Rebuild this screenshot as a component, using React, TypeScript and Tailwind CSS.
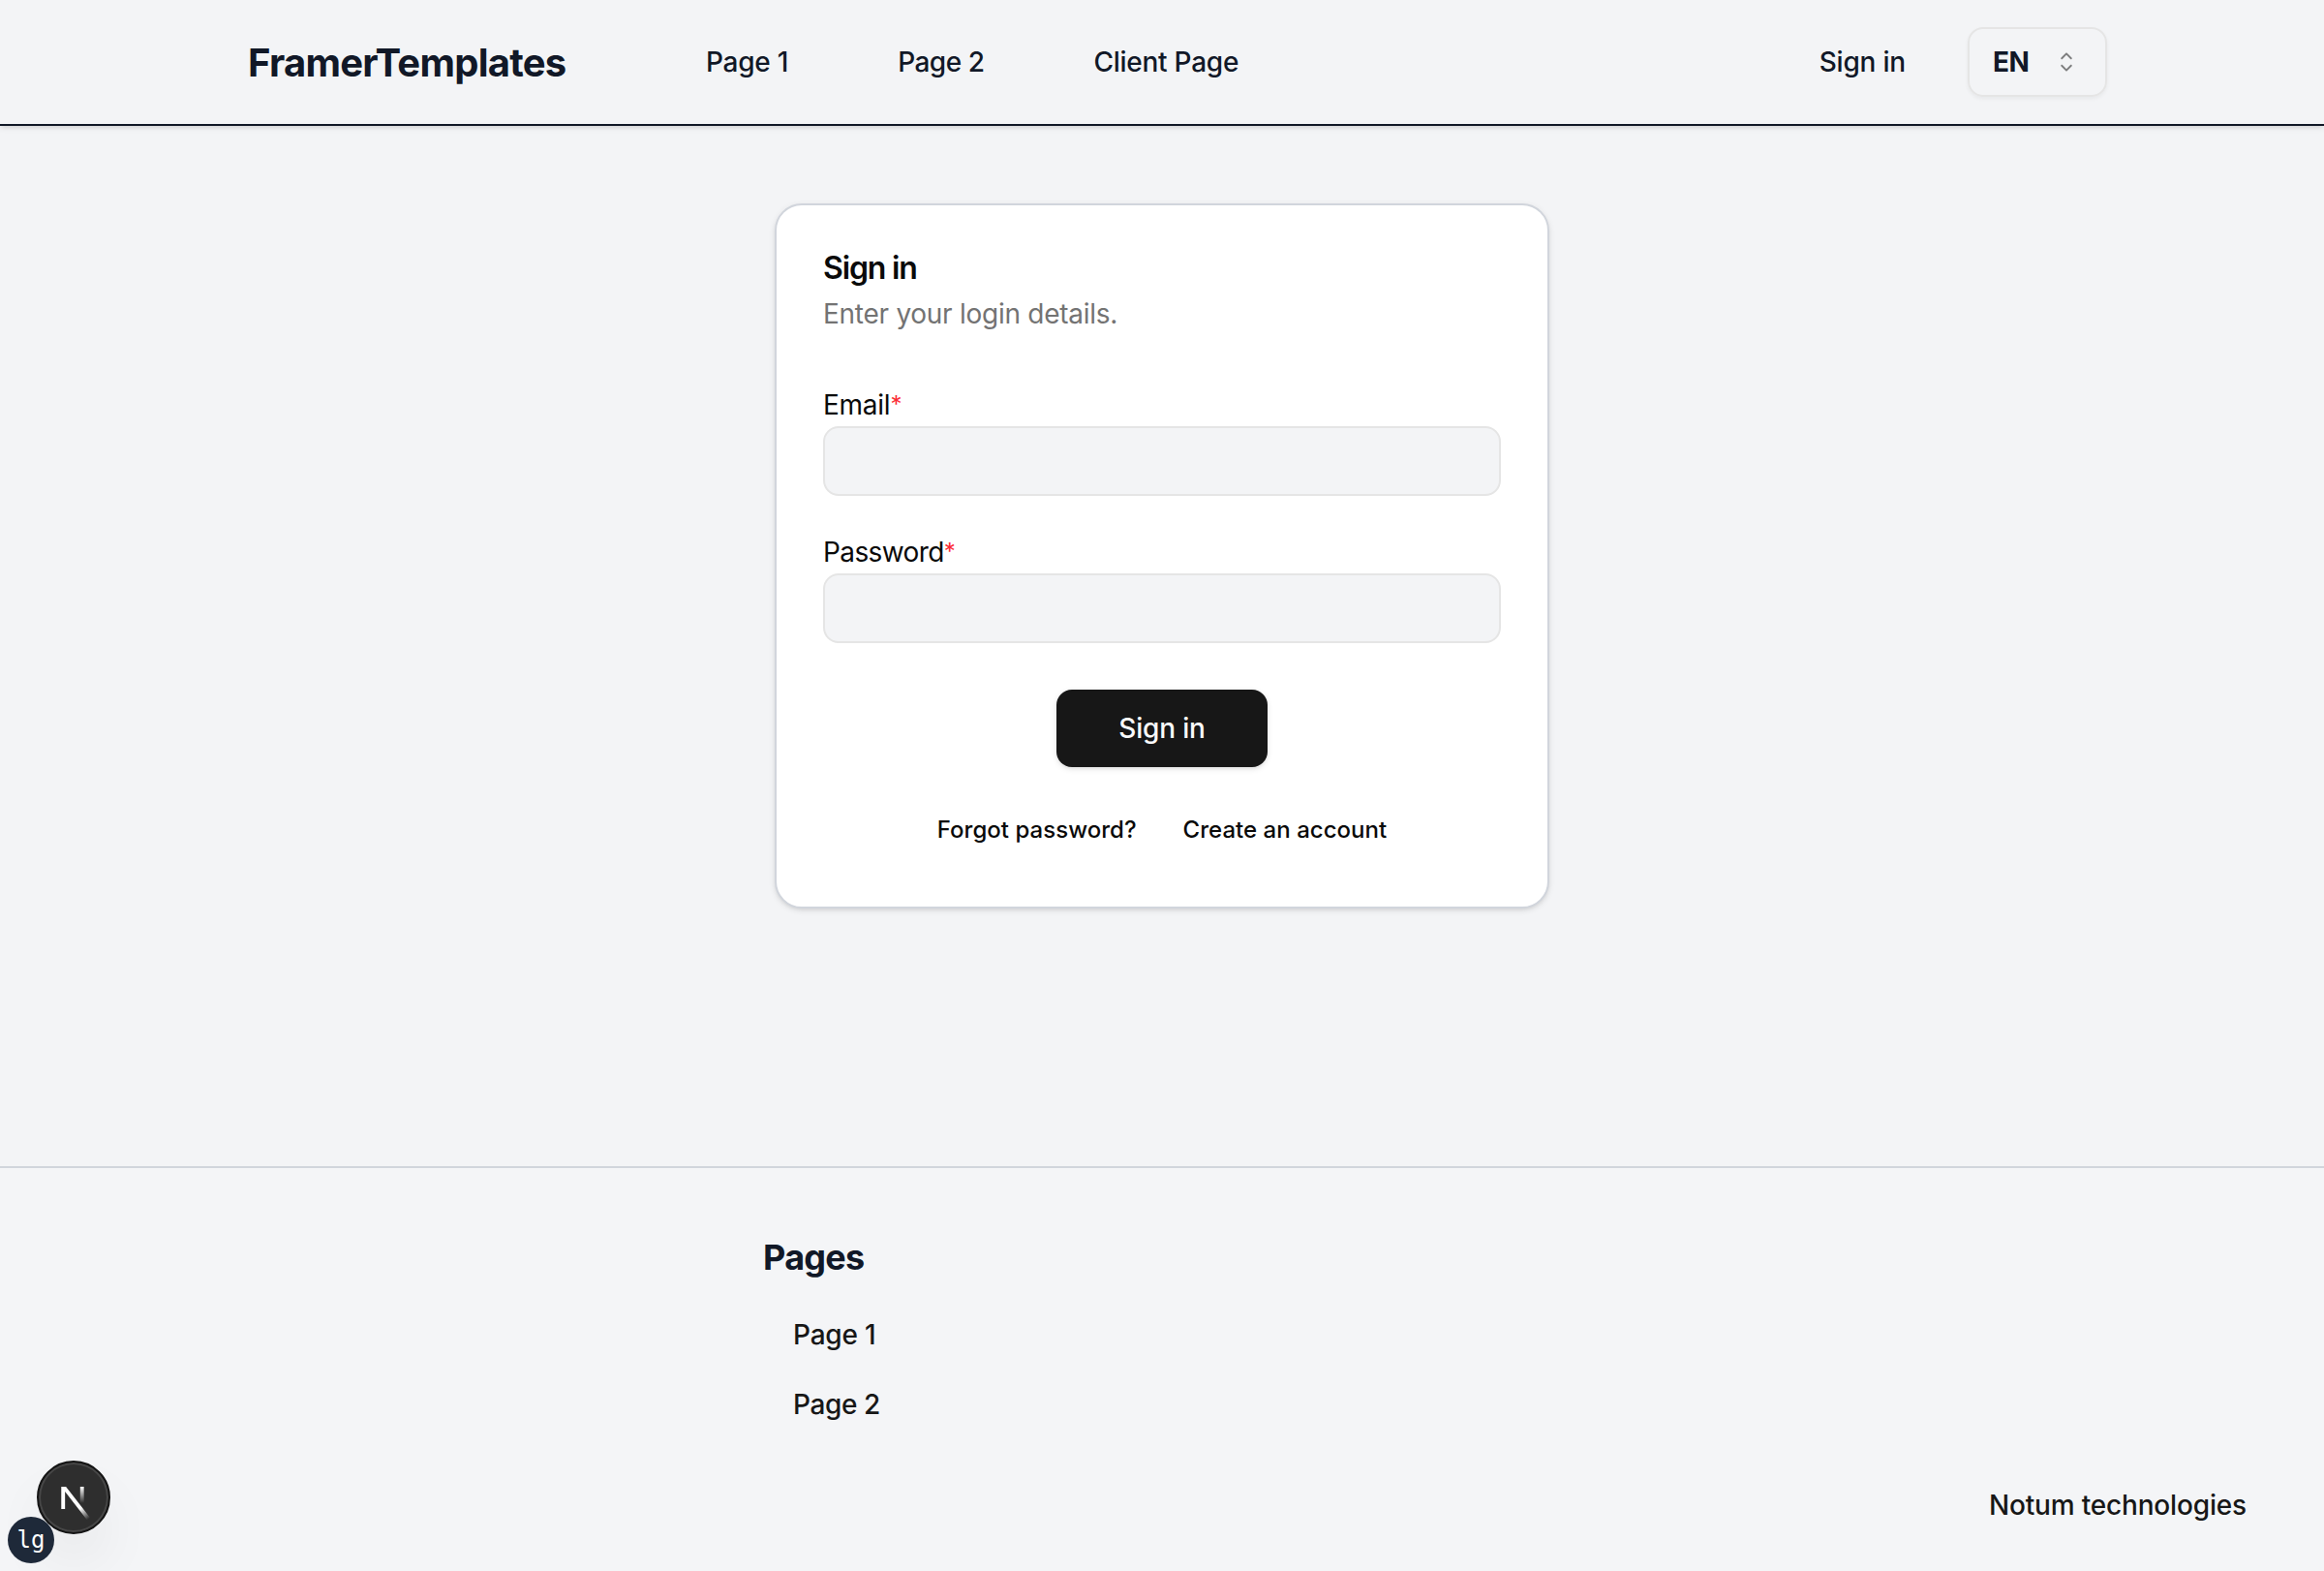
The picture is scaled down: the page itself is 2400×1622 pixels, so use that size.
function CaretSort() {
  return (
    <svg viewBox="0 0 15 15" className="size-8 opacity-50" fill="currentColor">
      <path
        fillRule="evenodd"
        clipRule="evenodd"
        d="M4.93179 5.43179C4.75605 5.60753 4.75605 5.89245 4.93179 6.06819C5.10753 6.24392 5.39245 6.24392 5.56819 6.06819L7.49999 4.13638L9.43179 6.06819C9.60753 6.24392 9.89245 6.24392 10.0682 6.06819C10.2439 5.89245 10.2439 5.60753 10.0682 5.43179L7.81819 3.18179C7.73379 3.0974 7.61933 3.04999 7.49999 3.04999C7.38064 3.04999 7.26618 3.0974 7.18179 3.18179L4.93179 5.43179ZM10.0682 9.56819C10.2439 9.39245 10.2439 9.10753 10.0682 8.93179C9.89245 8.75606 9.60753 8.75606 9.43179 8.93179L7.49999 10.8636L5.56819 8.93179C5.39245 8.75606 5.10753 8.75606 4.93179 8.93179C4.75605 9.10753 4.75605 9.39245 4.93179 9.56819L7.18179 11.8182C7.35753 11.9939 7.64245 11.9939 7.81819 11.8182L10.0682 9.56819Z"
      />
    </svg>
  );
}

function Header() {
  return (
    <header className="relative flex h-[130px] items-center border-b-2 border-[#111827] bg-gray-100 pr-56 pl-64 text-[28px] font-[450] text-[#111827] shadow-[0_2px_6px_rgba(0,0,0,0.1),0_2px_4px_-2px_rgba(0,0,0,0.1)]">
      <a className="w-[473px] pt-0.5 text-[40px] font-bold tracking-[-0.75px]">FramerTemplates</a>
      <nav className="flex flex-1 gap-[113px]">
        <a className="tracking-[-0.25px]">Page 1</a>
        <a className="tracking-[-0.5px]">Page 2</a>
        <a className="tracking-[-0.25px]">Client Page</a>
      </nav>
      <a className="mr-16 tracking-[-0.2px]">Sign in</a>
      <button className="flex h-[72px] w-36 items-center justify-between rounded-2xl border-2 border-[#e5e5e5] px-6 font-bold tracking-[-0.4px] shadow-[0_2px_4px_rgba(0,0,0,0.05)]">
        EN
        <span className="text-neutral-950">
          <CaretSort />
        </span>
      </button>
    </header>
  );
}

function Field({ label, type, tracking }: { label: string; type: string; tracking: string }) {
  return (
    <label className="flex flex-col gap-2">
      <span className="flex h-7 items-center leading-7">
        <span className={tracking}>{label}</span>
        <span className="text-2xl leading-7 text-red-500">*</span>
      </span>
      <input
        type={type}
        className="h-[72px] w-full rounded-2xl border-2 border-[#e5e5e5] bg-gray-100 px-6 outline-none"
      />
    </label>
  );
}

function SignInCard() {
  return (
    <section className="flex h-[728px] w-[800px] flex-col rounded-[28px] border-2 border-gray-300 bg-white p-12 text-[28px] text-neutral-950 shadow-[0_2px_6px_rgba(0,0,0,0.1),0_2px_4px_-2px_rgba(0,0,0,0.1)]">
      <h1 className="text-[32px] leading-[34px] font-semibold tracking-[-1.15px]">Sign in</h1>
      <p className="mt-2.5 leading-10 tracking-[-0.27px] text-neutral-500">Enter your login details.</p>
      <form className="mt-[60px] flex flex-col gap-11">
        <Field label="Email" type="email" tracking="tracking-[-0.25px]" />
        <Field label="Password" type="password" tracking="tracking-[-0.6px]" />
      </form>
      <button className="mt-12 h-20 w-[218px] self-center rounded-2xl bg-neutral-900 font-[450] tracking-[-0.2px] text-neutral-50 shadow-[0_2px_6px_rgba(0,0,0,0.1),0_2px_4px_-2px_rgba(0,0,0,0.1)]">
        Sign in
      </button>
      <div className="mt-[49px] flex justify-center gap-12 text-2xl leading-8 font-[450]">
        <a className="tracking-[0.03px]">Forgot password?</a>
        <a className="tracking-[0.03px]">Create an account</a>
      </div>
    </section>
  );
}

function Footer() {
  return (
    <footer className="flex h-[418px] justify-between border-t-2 border-gray-300 bg-[#f4f5f7] text-[28px] font-[450] text-neutral-900">
      <div className="ml-[788px] pt-[72px]">
        <h2 className="text-4xl leading-10 font-bold tracking-[-0.74px] text-[#111827]">Pages</h2>
        <ul className="mt-6 ml-[31px] leading-[72px]">
          <li className="tracking-[-0.2px]">Page 1</li>
          <li className="tracking-[-0.4px]">Page 2</li>
        </ul>
      </div>
      <p className="mr-20 mb-12 self-end leading-10 tracking-[-0.17px]">Notum technologies</p>
    </footer>
  );
}

function DevBadges() {
  return (
    <>
      <div className="absolute top-[1508px] left-[38px] size-[76px] rounded-full border-2 border-[#141414] bg-[#2e2e2e] shadow-[inset_0_0_0_2px_#474747,0_32px_64px_-16px_rgba(0,0,0,0.14)]">
        <svg viewBox="0 0 72 72" className="size-[72px]" fill="none">
          <defs>
            <linearGradient id="diagonal" x1="116" y1="124" x2="143" y2="157" gradientUnits="userSpaceOnUse">
              <stop stopColor="#fff" />
              <stop offset="1" stopColor="#fff" stopOpacity="0" />
            </linearGradient>
            <linearGradient id="stem" x1="121" y1="54" x2="120.8" y2="106.9" gradientUnits="userSpaceOnUse">
              <stop stopColor="#fff" />
              <stop offset="1" stopColor="#fff" stopOpacity="0" />
            </linearGradient>
          </defs>
          <g transform="translate(6 7.7) scale(0.32)">
            <path
              d="M149.508 157.52L69.142 54H54V125.97H66.1136V69.3836L139.999 164.845C143.333 162.614 146.509 160.165 149.508 157.52Z"
              fill="url(#diagonal)"
            />
            <rect x="115" y="54" width="12" height="72" fill="url(#stem)" />
          </g>
        </svg>
      </div>
      <div className="absolute top-[1566px] left-2 flex size-12 items-center justify-center rounded-full bg-gray-800 font-['DejaVu_Sans_Mono',monospace] text-2xl text-white">
        lg
      </div>
    </>
  );
}

export default function App() {
  return (
    <div className="relative flex h-[1622px] w-[2400px] flex-col overflow-hidden bg-gray-100 font-['Inter',sans-serif]">
      <Header />
      <main className="flex flex-1 items-start justify-center pt-20">
        <SignInCard />
      </main>
      <Footer />
      <DevBadges />
    </div>
  );
}
